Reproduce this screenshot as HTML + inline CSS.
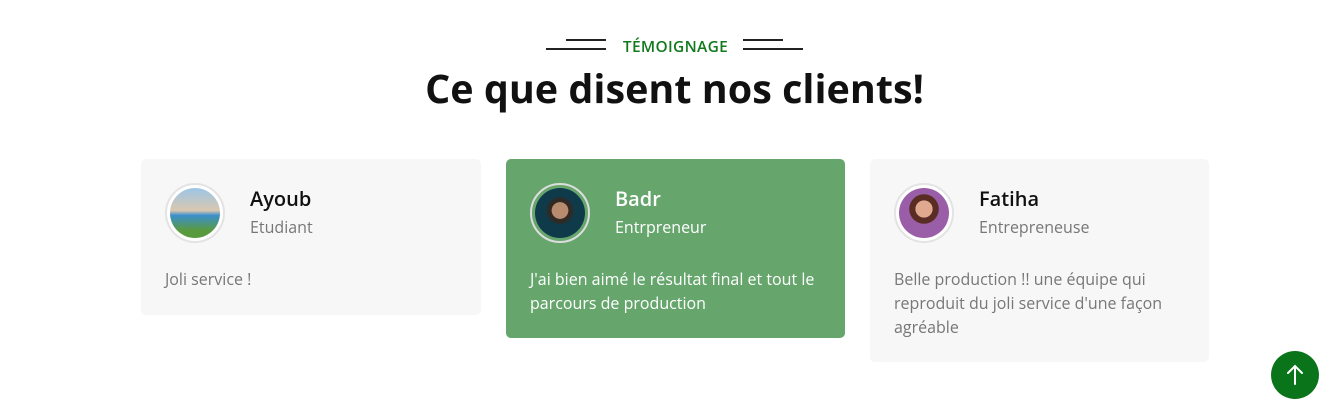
<!DOCTYPE html>
<html><head><meta charset="utf-8"><style>
*{margin:0;padding:0;box-sizing:border-box}
body{width:1343px;height:410px;background:#fff;font-family:"Open Sans","Liberation Sans",sans-serif;position:relative;overflow:hidden}
.ln{position:absolute;height:2px;background:#222}
.tag{position:absolute;left:4px;width:1343px;top:35px;text-align:center;color:#127a1e;font-size:15.5px;font-weight:600;letter-spacing:.3px}
h1{position:absolute;left:3px;width:1343px;top:61px;text-align:center;font-size:39.5px;font-weight:bold;color:#111}
.card{position:absolute;top:159px;width:340px;background:#f7f7f7;border-radius:5px}
.av{position:absolute;left:24px;top:24px;width:60px;height:60px;border-radius:50%;border:2px solid #e3e3e3;background:#fff;padding:3px}
.av div{width:100%;height:100%;border-radius:50%}
.nm{position:absolute;left:109px;top:26px;font-size:20px;font-weight:600;color:#111}
.rl{position:absolute;left:109px;top:57px;font-size:16px;color:#777}
.tx{position:absolute;left:24px;top:108px;right:20px;font-size:16px;line-height:24px;color:#777}
.g{background:#66a66d}.g .nm,.g .rl,.g .tx{color:#fff}.g .av{background:transparent;border-color:#ddd}
.up{position:absolute;left:1271px;top:351px;width:48px;height:48px;border-radius:50%;background:#0a741a}
</style></head><body>
<div class="ln" style="left:566px;top:39px;width:40px"></div>
<div class="ln" style="left:546px;top:48px;width:60px"></div>
<div class="ln" style="left:743px;top:39px;width:40px"></div>
<div class="ln" style="left:743px;top:48px;width:60px"></div>
<div class="tag">TÉMOIGNAGE</div>
<h1>Ce que disent nos clients!</h1>
<div class="card" style="left:141px;height:156px">
<div class="av"><div style="background:linear-gradient(180deg,#9cc6e6 0%,#d9c7b0 45%,#3b8fcc 55%,#5a9a3e 85%)"></div></div>
<div class="nm">Ayoub</div><div class="rl">Etudiant</div><div class="tx">Joli service !</div></div>
<div class="card g" style="left:506px;width:339px;height:179px">
<div class="av"><div style="background:radial-gradient(circle at 50% 45%,#b88a6e 0 22%,#2f2a26 23% 35%,#0e3a4a 36%)"></div></div>
<div class="nm">Badr</div><div class="rl">Entrpreneur</div><div class="tx">J'ai bien aimé le résultat final et tout le parcours de production</div></div>
<div class="card" style="left:870px;width:339px;height:203px">
<div class="av"><div style="background:radial-gradient(circle at 50% 42%,#e0a88e 0 22%,#5a2d24 23% 38%,#9a5ea8 39%)"></div></div>
<div class="nm">Fatiha</div><div class="rl">Entrepreneuse</div><div class="tx">Belle production !! une équipe qui reproduit du joli service d'une façon agréable</div></div>
<div class="up"><svg width="48" height="48" viewBox="0 0 48 48"><path d="M24 33V15M17 22l7-7 7 7" stroke="#fff" stroke-width="2" fill="none" stroke-linecap="round"/></svg></div>
</body></html>
